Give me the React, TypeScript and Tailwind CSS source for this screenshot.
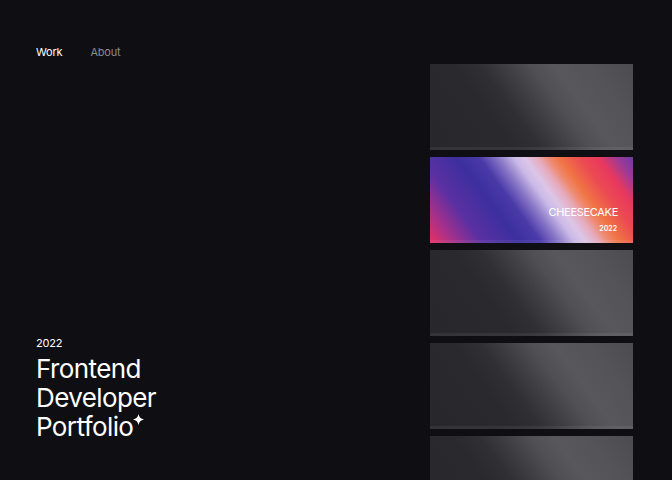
const grey =
  'bg-[linear-gradient(54deg,#28282c_0%,#2a2a2e_32%,#303034_42%,#404044_52%,#505054_61%,#58585c_70%,#545458_84%,#4c4c50_100%)]';

function Card({ children, className }: { children?: React.ReactNode; className?: string }) {
  return (
    <div className={`relative h-[86px] w-full shrink-0 shadow-[inset_0_-3px_0_rgba(255,255,255,0.06)] ${className ?? grey}`}>
      {children}
    </div>
  );
}

function Sparkle() {
  return (
    <svg
      viewBox="0 0 10 10"
      className="relative -top-[11px] inline-block h-[11px] w-[11px] align-baseline"
      fill="white"
    >
      <path d="M5 0 Q5.7 4.3 10 5 Q5.7 5.7 5 10 Q4.3 5.7 0 5 Q4.3 4.3 5 0 Z" />
    </svg>
  );
}

export default function App() {
  return (
    <div
      className="flex h-[480px] w-full overflow-hidden bg-[#0f0f13] text-white"
      style={{ fontFamily: 'Inter, "Liberation Sans", sans-serif' }}
    >
      <div className="flex flex-1 flex-col justify-between pl-[36px] pt-[44px] pb-[39px]">
        <nav className="flex gap-[28px] text-[11px] tracking-[-0.2px]">
          <a className="text-white">Work</a>
          <a className="text-[#8a8a90]">About</a>
        </nav>
        <div>
          <div className="mb-[3px] text-[11px] tracking-[-0.2px]">2022</div>
          <h1 className="text-[26px] font-normal leading-[29px] tracking-[-0.6px]">
            Frontend
            <br />
            Developer
            <br />
            Portfolio
            <Sparkle />
          </h1>
        </div>
      </div>
      <div className="mr-[39px] flex w-[203px] flex-col gap-[7px] pt-[64px]">
        <Card />
        <Card className="bg-[linear-gradient(54deg,#e8305f_0%,#a8308a_9%,#5a30a2_20%,#3c2f9e_34%,#4a3aa8_42%,#8a78c8_49%,#cbbae6_55%,#dcc6e8_59%,#e6aabc_64%,#ee8a70_68%,#f07444_72%,#ec4a52_80%,#e8385e_87%,#9a3a98_94%,#6c3ca0_100%)]">
          <div className="absolute right-[15px] top-[50px] text-[11px] tracking-[-0.3px] leading-none text-white">
            CHEESECAKE
          </div>
          <div className="absolute right-[16px] top-[68px] text-[7px] font-semibold leading-none text-white">
            2022
          </div>
        </Card>
        <Card />
        <Card />
        <Card />
      </div>
    </div>
  );
}
